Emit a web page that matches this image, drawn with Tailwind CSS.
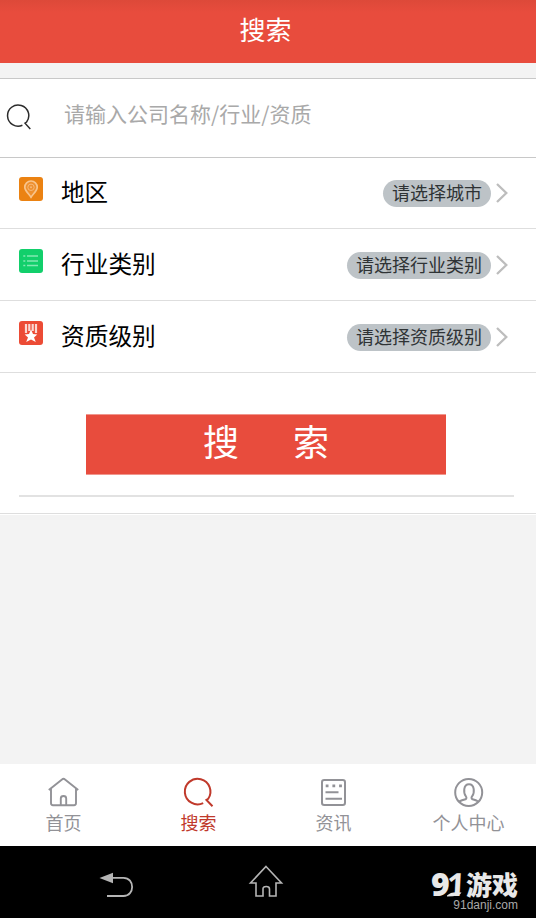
<!DOCTYPE html>
<html lang="zh-CN">
<head>
    <meta charset="UTF-8">
    <meta name="viewport" content="width=device-width, initial-scale=1.0">
    <title>搜索</title>
    <script src="https://cdn.jsdelivr.net/npm/@tailwindcss/browser@4"></script>
</head>
<body class="overflow-hidden bg-[#f3f3f3] font-['Noto_Sans_CJK_SC',sans-serif]">
    <div class="-ml-1 flex h-[918px] w-[540px] flex-col">
        <!-- Header -->
        <header class="h-[63px] shrink-0 bg-linear-to-b from-[#dd4939] to-[#e84c3d] to-20% pr-px text-center">
            <h1 class="text-[26px] leading-[57px] text-white">搜索</h1>
        </header>

        <main class="flex-1 pt-[15px]">
            <!-- Search input -->
            <div class="flex h-20 items-center border-y border-[#c8c8c8] bg-white pl-[10px]">
                <svg class="mt-[-2px] size-[26px] shrink-0" viewBox="0 0 26 26" fill="none" stroke="#2b2b2b" stroke-width="1.5">
                    <path d="M16.4 21.3A10.6 10.6 0 1 1 20.6 18L19 19.2L24.3 25"/>
                </svg>
                <input type="text" class="mt-[-11px] ml-[32px] h-10 w-[400px] text-[21px] outline-none placeholder:text-[#a9a9a9]" placeholder="请输入公司名称/行业/资质">
            </div>

            <!-- Filters -->
            <div class="bg-white">
                <div class="flex h-[71px] items-center border-b border-[#dedede] pr-[28px] pl-[23px]">
                    <svg class="mt-[-8px] size-6" viewBox="0 0 24 24" fill="none">
                        <rect width="24" height="24" rx="3" fill="#eb8212"/>
                        <path d="M12 20.2C10 17 5.8 13.7 5.8 10.2a6.2 6.2 0 0 1 12.4 0C18.2 13.7 14 17 12 20.2Z" fill="#ee9030" stroke="#f8c48c" stroke-width="1.7"/>
                        <circle cx="12" cy="10.3" r="3.2" stroke="#f7b978"/>
                        <circle cx="12" cy="10.3" r="1" fill="#f7b978"/>
                    </svg>
                    <span class="mt-[-2px] ml-[18px] text-[23.5px] text-black">地区</span>
                    <span class="ml-auto h-[27px] rounded-full bg-[#bdc3c7] px-[9px] text-lg leading-[25px] text-[#2f3335]">请选择城市</span>
                    <svg class="ml-[5px] h-5 w-3" viewBox="0 0 12 20" fill="none" stroke="#bdbdbd" stroke-width="2.3"><path d="M1 1L10.3 10L1 19"/></svg>
                </div>
                <div class="flex h-[72px] items-center border-b border-[#dedede] pr-[28px] pl-[23px]">
                    <svg class="mt-[-7px] size-6" viewBox="0 0 24 24" fill="none">
                        <rect width="24" height="24" rx="3" fill="#12cf6b"/>
                        <path d="M4.3 7h2M4.3 12h2M4.3 16.5h2M8 7h11M8 12h11M8 16.5h11" stroke="#83e9b3" stroke-width="1.7"/>
                    </svg>
                    <span class="mt-[-1px] ml-[18px] text-[23.7px] text-black">行业类别</span>
                    <span class="mt-px ml-auto h-[27px] rounded-full bg-[#bdc3c7] px-[9px] text-lg leading-[25px] text-[#2f3335]">请选择行业类别</span>
                    <svg class="mt-px ml-[5px] h-5 w-3" viewBox="0 0 12 20" fill="none" stroke="#bdbdbd" stroke-width="2.3"><path d="M1 1L10.3 10L1 19"/></svg>
                </div>
                <div class="flex h-[72px] items-center border-b border-[#dedede] pr-[28px] pl-[23px]">
                    <svg class="mt-[-7px] size-6" viewBox="0 0 24 24" fill="none">
                        <rect width="24" height="24" rx="3" fill="#ec4b35"/>
                        <path d="M7 3v9M10.3 3v7M13.7 3v7M17 3v9" stroke="#fbd8d2" stroke-width="2.2"/>
                        <path d="M12 8.6L14 13L18.3 13.5L15 16.4L16.8 21L12 18.5L7.2 21L9 16.4L5.7 13.5L10 13Z" fill="#fff"/>
                    </svg>
                    <span class="mt-[-1px] ml-[18px] text-[23.7px] text-black">资质级别</span>
                    <span class="mt-px ml-auto h-[27px] rounded-full bg-[#bdc3c7] px-[9px] text-lg leading-[25px] text-[#2f3335]">请选择资质级别</span>
                    <svg class="mt-px ml-[5px] h-5 w-3" viewBox="0 0 12 20" fill="none" stroke="#bdbdbd" stroke-width="2.3"><path d="M1 1L10.3 10L1 19"/></svg>
                </div>

                <!-- Submit -->
                <div class="h-[141px] border-b border-[#dedede] pt-[41px]">
                    <button class="mx-auto flex h-[61px] w-[360px] justify-center gap-[54px] border-y border-[#f0968d] bg-[#e84c3d] text-4xl leading-[50px] text-white">
                        <span>搜</span>
                        <span>索</span>
                    </button>
                    <div class="mt-5 mr-[22px] ml-[23px] h-[2px] bg-[#e2e2e2]"></div>
                </div>
                <div class="h-px bg-white"></div>
            </div>
        </main>

        <!-- Tab bar -->
        <nav class="grid h-[82px] shrink-0 grid-cols-4 bg-white text-lg leading-6 text-[#929297]">
            <a class="flex flex-col items-center pt-3">
                <svg class="size-8" viewBox="0 0 32 32" fill="none" stroke="currentColor" stroke-width="1.9" stroke-linejoin="round">
                    <path d="M.8 14L14 3.4Q15.5 2.2 17 3.4L30.2 14M3 12.5V27Q3 29.2 5 29.2H26Q28 29.2 28 27V12.5M12.8 29V22.5Q12.8 20 15.5 20T18.2 22.5V29"/>
                </svg>
                <span class="mt-[2px]">首页</span>
            </a>
            <a class="flex flex-col items-center pt-3 text-[#c0392b]">
                <svg class="mr-[2px] size-8" viewBox="0 0 32 32" fill="none" stroke="currentColor" stroke-width="2">
                    <path d="M21.2 27.1A12.8 12.8 0 1 1 26.2 22.8L24.4 24L30.5 30.3"/>
                </svg>
                <span class="mt-[2px]">搜索</span>
            </a>
            <a class="flex flex-col items-center pt-3">
                <svg class="size-8" viewBox="0 0 32 32" fill="none" stroke="currentColor" stroke-width="2">
                    <rect x="4" y="4" width="23" height="25" rx="2.2"/>
                    <path d="M7.5 16.3H20.5M7.5 22.7H24"/>
                    <path d="M7.7 9.8h2.8M14.4 9.8h2.8M21.1 9.8h2.8" stroke-width="2.8"/>
                </svg>
                <span class="mt-[2px]">资讯</span>
            </a>
            <a class="flex flex-col items-center pt-3">
                <svg class="size-8" viewBox="0 0 32 32" fill="none" stroke="currentColor" stroke-width="2">
                    <circle cx="15.7" cy="16.4" r="13.5"/>
                    <path d="M6.2 25.5Q8.7 24.2 12.5 23.3Q14.2 22.2 12.8 20.2C10.5 17.5 10 8.2 16 8.2S21.5 17.5 19.2 20.2Q17.7 22.2 19.5 23.3Q23.2 24.2 25.2 25.5"/>
                </svg>
                <span class="mt-[2px]">个人中心</span>
            </a>
        </nav>

        <!-- System navigation -->
        <footer class="flex h-[72px] shrink-0 items-start bg-black">
            <svg class="mt-[26px] ml-[103px] h-[26px] w-[35px]" viewBox="0 0 35 26" fill="none">
                <path d="M13 5.8H24.5C36 5.8 36 24 24.5 24H8" stroke="#b5b5b5" stroke-width="1.8"/>
                <path d="M0.5 6L14 0.8V11.2Z" fill="#b5b5b5"/>
            </svg>
            <svg class="mt-[19px] ml-[114px] h-[34px] w-9" viewBox="0 0 36 34" fill="none" stroke="#b5b5b5" stroke-width="1.6">
                <path d="M18 1.5L33.5 18H28V31H21.5V24Q21.5 21.5 18.2 21.5T15 24V31H8V18H2.5Z"/>
            </svg>
            <div class="mt-[25px] mr-[18px] ml-auto flex w-[87px] flex-col items-end text-[#e8e8e8]">
                <div class="flex w-full items-center justify-between leading-[26px] font-black">
                    <div class="relative flex font-['Open_Sans'] text-[32px]">
                        <span class="font-extrabold">9</span>
                        <span class="-ml-[3px] w-3 -skew-x-3 font-bold">1</span>
                        <!-- Swoosh under the 1 -->
                        <svg class="absolute bottom-0 left-[16px] h-[9px] w-[15px]" viewBox="0 0 15 9">
                            <path d="M0 7.5Q4 3 14.5 4.5Q13 8.5 0 8.5Z" fill="#e8e8e8"/>
                        </svg>
                    </div>
                    <span class="text-[26px] leading-[26px]">游戏</span>
                </div>
                <span class="mt-[2px] font-['Liberation_Sans'] text-xs leading-3 text-[#a9a9a9]">91danji.com</span>
            </div>
        </footer>
    </div>
</body>
</html>
